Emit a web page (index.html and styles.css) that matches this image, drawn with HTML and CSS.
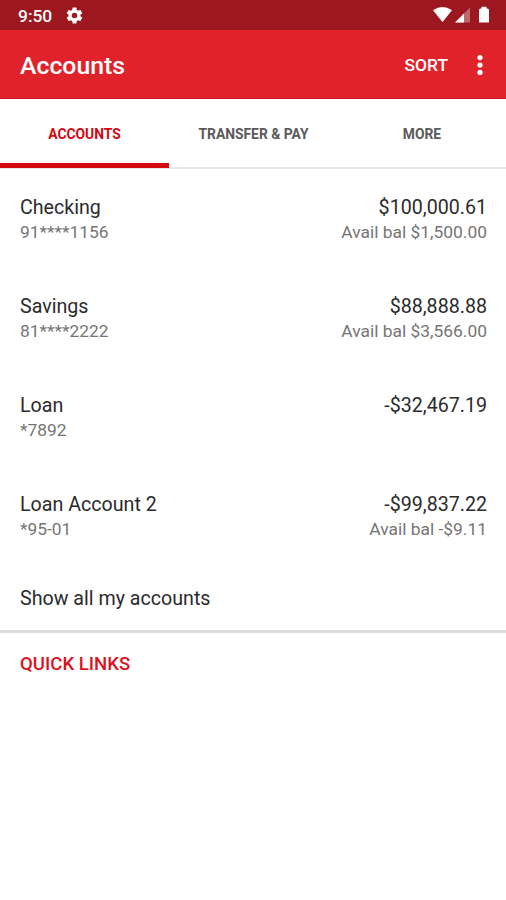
FILE: index.html
```html
<!DOCTYPE html>
<html lang="en">
<head>
<meta charset="utf-8">
<title>Accounts</title>
<link rel="stylesheet" href="styles.css">
</head>
<body>
<div class="status">
  <span class="time">9:50</span>
  <svg class="gear" viewBox="0 0 24 24"><path fill="#fff" d="M19.43 12.98c.04-.32.07-.64.07-.98s-.03-.66-.07-.98l2.11-1.65c.19-.15.24-.42.12-.64l-2-3.46c-.12-.22-.39-.3-.61-.22l-2.49 1c-.52-.4-1.08-.73-1.69-.98l-.38-2.65C14.46 2.18 14.25 2 14 2h-4c-.25 0-.46.18-.49.42l-.38 2.65c-.61.25-1.17.59-1.69.98l-2.49-1c-.23-.09-.49 0-.61.22l-2 3.46c-.13.22-.07.49.12.64l2.11 1.65c-.04.32-.07.65-.07.98s.03.66.07.98l-2.11 1.65c-.19.15-.24.42-.12.64l2 3.46c.12.22.39.3.61.22l2.49-1c.52.4 1.08.73 1.69.98l.38 2.65c.03.24.24.42.49.42h4c.25 0 .46-.18.49-.42l.38-2.65c.61-.25 1.17-.59 1.69-.98l2.49 1c.23.09.49 0 .61-.22l2-3.46c.12-.22.07-.49-.12-.64l-2.11-1.65zM12 15.5a3.500 3.500 0 1 1 0-7 3.500 3.500 0 0 1 0 7z"/></svg>
  <svg class="signals" viewBox="0 0 58 18"><path fill="#fff" d="M0 4.200Q9.500-2.200 19 4.200L9.500 16Z"/><path fill="#fff" fill-opacity=".35" d="M22 16.500L37 1.500V16.500Z"/><path fill="#fff" d="M22 16.500L31 7.500V16.500Z"/><path fill="#fff" d="M46 4Q46 2.500 47.500 2.500H48.500V.8H53.500V2.500H54.500Q56 2.500 56 4V16.500H46Z"/></svg>
</div>
<header class="bar"><h1>Accounts</h1><span class="sort">SORT</span><svg class="dots" viewBox="0 0 6 20"><g fill="#fff"><circle cx="3" cy="2.600" r="2.600"/><circle cx="3" cy="10" r="2.600"/><circle cx="3" cy="17.400" r="2.600"/></g></svg></header>
<nav class="tabs"><span class="tab active">ACCOUNTS</span><span class="tab">TRANSFER &amp; PAY</span><span class="tab">MORE</span></nav>
<main>
  <section class="account"><div><p class="name">Checking</p><p class="sub">91****1156</p></div><div class="right"><p class="name">$100,000.61</p><p class="sub">Avail bal $1,500.00</p></div></section>
  <section class="account"><div><p class="name">Savings</p><p class="sub">81****2222</p></div><div class="right"><p class="name">$88,888.88</p><p class="sub">Avail bal $3,566.00</p></div></section>
  <section class="account"><div><p class="name">Loan</p><p class="sub">*7892</p></div><div class="right"><p class="name">-$32,467.19</p></div></section>
  <section class="account"><div><p class="name">Loan Account 2</p><p class="sub">*95-01</p></div><div class="right"><p class="name">-$99,837.22</p><p class="sub">Avail bal -$9.11</p></div></section>
  <p class="show">Show all my accounts</p>
  <h2>QUICK LINKS</h2>
</main>
</body>
</html>
```
FILE: styles.css
```css
* { box-sizing: border-box; margin: 0; padding: 0; }
body { font-family: Roboto, "Liberation Sans", sans-serif; background: #fff; color: #2b2b2b; height: 900px; overflow: hidden; }
.status { height: 30px; background: #9d181e; color: #fff; display: flex; align-items: center; padding: 0 15px 0 18px; }
.time { font-size: 17.4px; font-weight: 500; line-height: 20px; padding-top: 2px; }
.gear { width: 19px; height: 19px; margin-left: 13px; }
.signals { width: 58px; height: 18px; margin-left: auto; }
.bar { height: 69px; background: #e0232a; color: #fff; display: flex; align-items: center; padding: 0 23px 0 20px; border-bottom: 1px solid #d8141b; }
h1 { font-size: 24.8px; font-weight: 500; flex: 1; padding-top: 2px; }
.sort { font-size: 17.4px; font-weight: 500; padding-top: 1px; }
.dots { width: 6px; height: 22px; margin-left: 29px; padding-top: 2px; }
.tabs { height: 70px; display: grid; grid-template-columns: 169px 169px 168px; border-bottom: 2px solid #e6e6e6; margin-bottom: 13px; }
.tab { height: 69px; font-size: 13.85px; font-weight: 700; color: #5a5a5a; text-align: center; line-height: 70px; }
.active { color: #d2080f; border-bottom: 5px solid #d2080f; }
.account { height: 99px; padding: 13px 19px 0 20px; display: flex; justify-content: space-between; }
.right { text-align: right; }
.name { font-size: 19.65px; line-height: 26px; }
.sub { font-size: 17.4px; line-height: 23px; color: #757575; }
.show { height: 55px; padding: 8px 20px 0; font-size: 19.65px; line-height: 26px; border-bottom: 3px solid #ddd; }
h2 { padding: 18px 20px; font-size: 18.6px; line-height: 26px; font-weight: 500; color: #d9141e; }
```
